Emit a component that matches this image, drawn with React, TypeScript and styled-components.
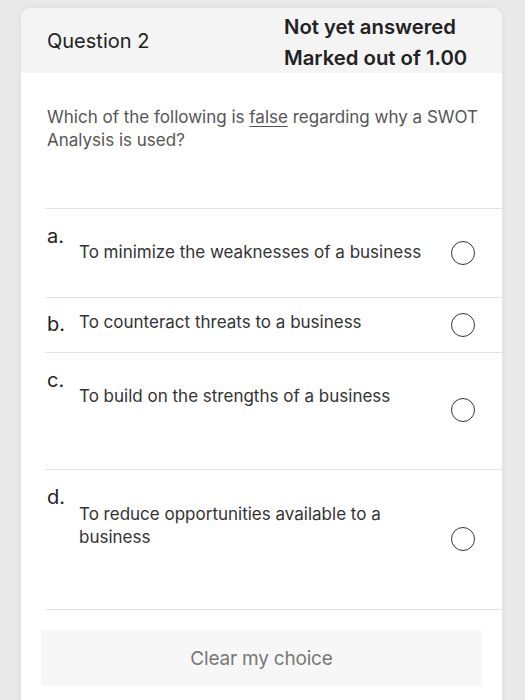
import React from "react";
import styled, { createGlobalStyle } from "styled-components";

const Global = createGlobalStyle`
  html, body { margin: 0; padding: 0; background: #e9e9e9; }
  body { font-family: Inter, "Noto Sans", sans-serif; -webkit-font-smoothing: antialiased; }
`;

const Page = styled.div`
  width: 525px;
  height: 700px;
  overflow: hidden;
  padding: 8px 23px 0 21px;
  box-sizing: border-box;
`;

const Card = styled.div`
  background: #fff;
  border-radius: 10px 10px 0 0;
  overflow: hidden;
  height: 700px;
  box-shadow: 0 0 6px rgba(0, 0, 0, 0.06);
`;

const Header = styled.div`
  background: #f4f4f4;
  height: 65px;
  display: flex;
  align-items: center;
  padding-left: 26px;
`;

const Title = styled.div`
  font-size: 20px;
  color: #222;
  width: 237px;
`;

const Status = styled.div`
  font-size: 20.3px;
  font-weight: 600;
  color: #222;
  line-height: 31px;
  margin-top: 2px;
`;

const Body = styled.div`
  padding: 0 0 0 24px;
`;

const Question = styled.div`
  font-size: 17px;
  line-height: 23px;
  color: #555;
  padding: 33px 20px 0 2px;
  height: 102px;
  border-bottom: 1px solid #e3e3e3;
  u { text-decoration-thickness: 1px; text-underline-offset: 3px; }
`;

const Option = styled.div<{ $h: number }>`
  height: ${(p) => p.$h}px;
  border-bottom: 1px solid #e3e3e3;
  display: grid;
  grid-template-columns: 32px 1fr 60px;
  padding-left: 2px;
`;

const Letter = styled.div<{ $top: number }>`
  font-size: 20px;
  color: #222;
  padding-top: ${(p) => p.$top}px;
  line-height: 24px;
`;

const Text = styled.div<{ $top: number }>`
  font-size: 17px;
  line-height: 23px;
  color: #333;
  padding-top: ${(p) => p.$top}px;
  padding-right: 20px;
`;

const RadioCell = styled.div<{ $top: number }>`
  padding-top: ${(p) => p.$top}px;
  display: flex;
  justify-content: center;
  padding-right: 18px;
`;

const Radio = styled.div`
  width: 22px;
  height: 22px;
  border: 1.5px solid #333;
  border-radius: 50%;
`;

const ButtonWrap = styled.div`
  padding: 20px 20px 0 20px;
`;

const ClearButton = styled.div`
  height: 56px;
  background: #f7f7f7;
  display: flex;
  align-items: center;
  justify-content: center;
  font-size: 19px;
  color: #777;
  letter-spacing: -0.2px;
`;

const options = [
  { l: "a.", t: "To minimize the weaknesses of a business", h: 88, lt: 15, tt: 32, rt: 32 },
  { l: "b.", t: "To counteract threats to a business", h: 54, lt: 14, tt: 13, rt: 15 },
  { l: "c.", t: "To build on the strengths of a business", h: 116, lt: 15, tt: 32, rt: 45 },
  { l: "d.", t: "To reduce opportunities available to a business", h: 139, lt: 15, tt: 33, rt: 57 },
];

export default function App() {
  return (
    <>
      <Global />
      <Page>
        <Card>
          <Header>
            <Title>Question 2</Title>
            <Status>
              Not yet answered
              <br />
              Marked out of 1.00
            </Status>
          </Header>
          <Body>
            <Question>
              Which of the following is <u>false</u> regarding why a SWOT Analysis is used?
            </Question>
            {options.map((o) => (
              <Option key={o.l} $h={o.h}>
                <Letter $top={o.lt}>{o.l}</Letter>
                <Text $top={o.tt}>{o.t}</Text>
                <RadioCell $top={o.rt}>
                  <Radio />
                </RadioCell>
              </Option>
            ))}
          </Body>
          <ButtonWrap>
            <ClearButton>Clear my choice</ClearButton>
          </ButtonWrap>
        </Card>
      </Page>
    </>
  );
}
